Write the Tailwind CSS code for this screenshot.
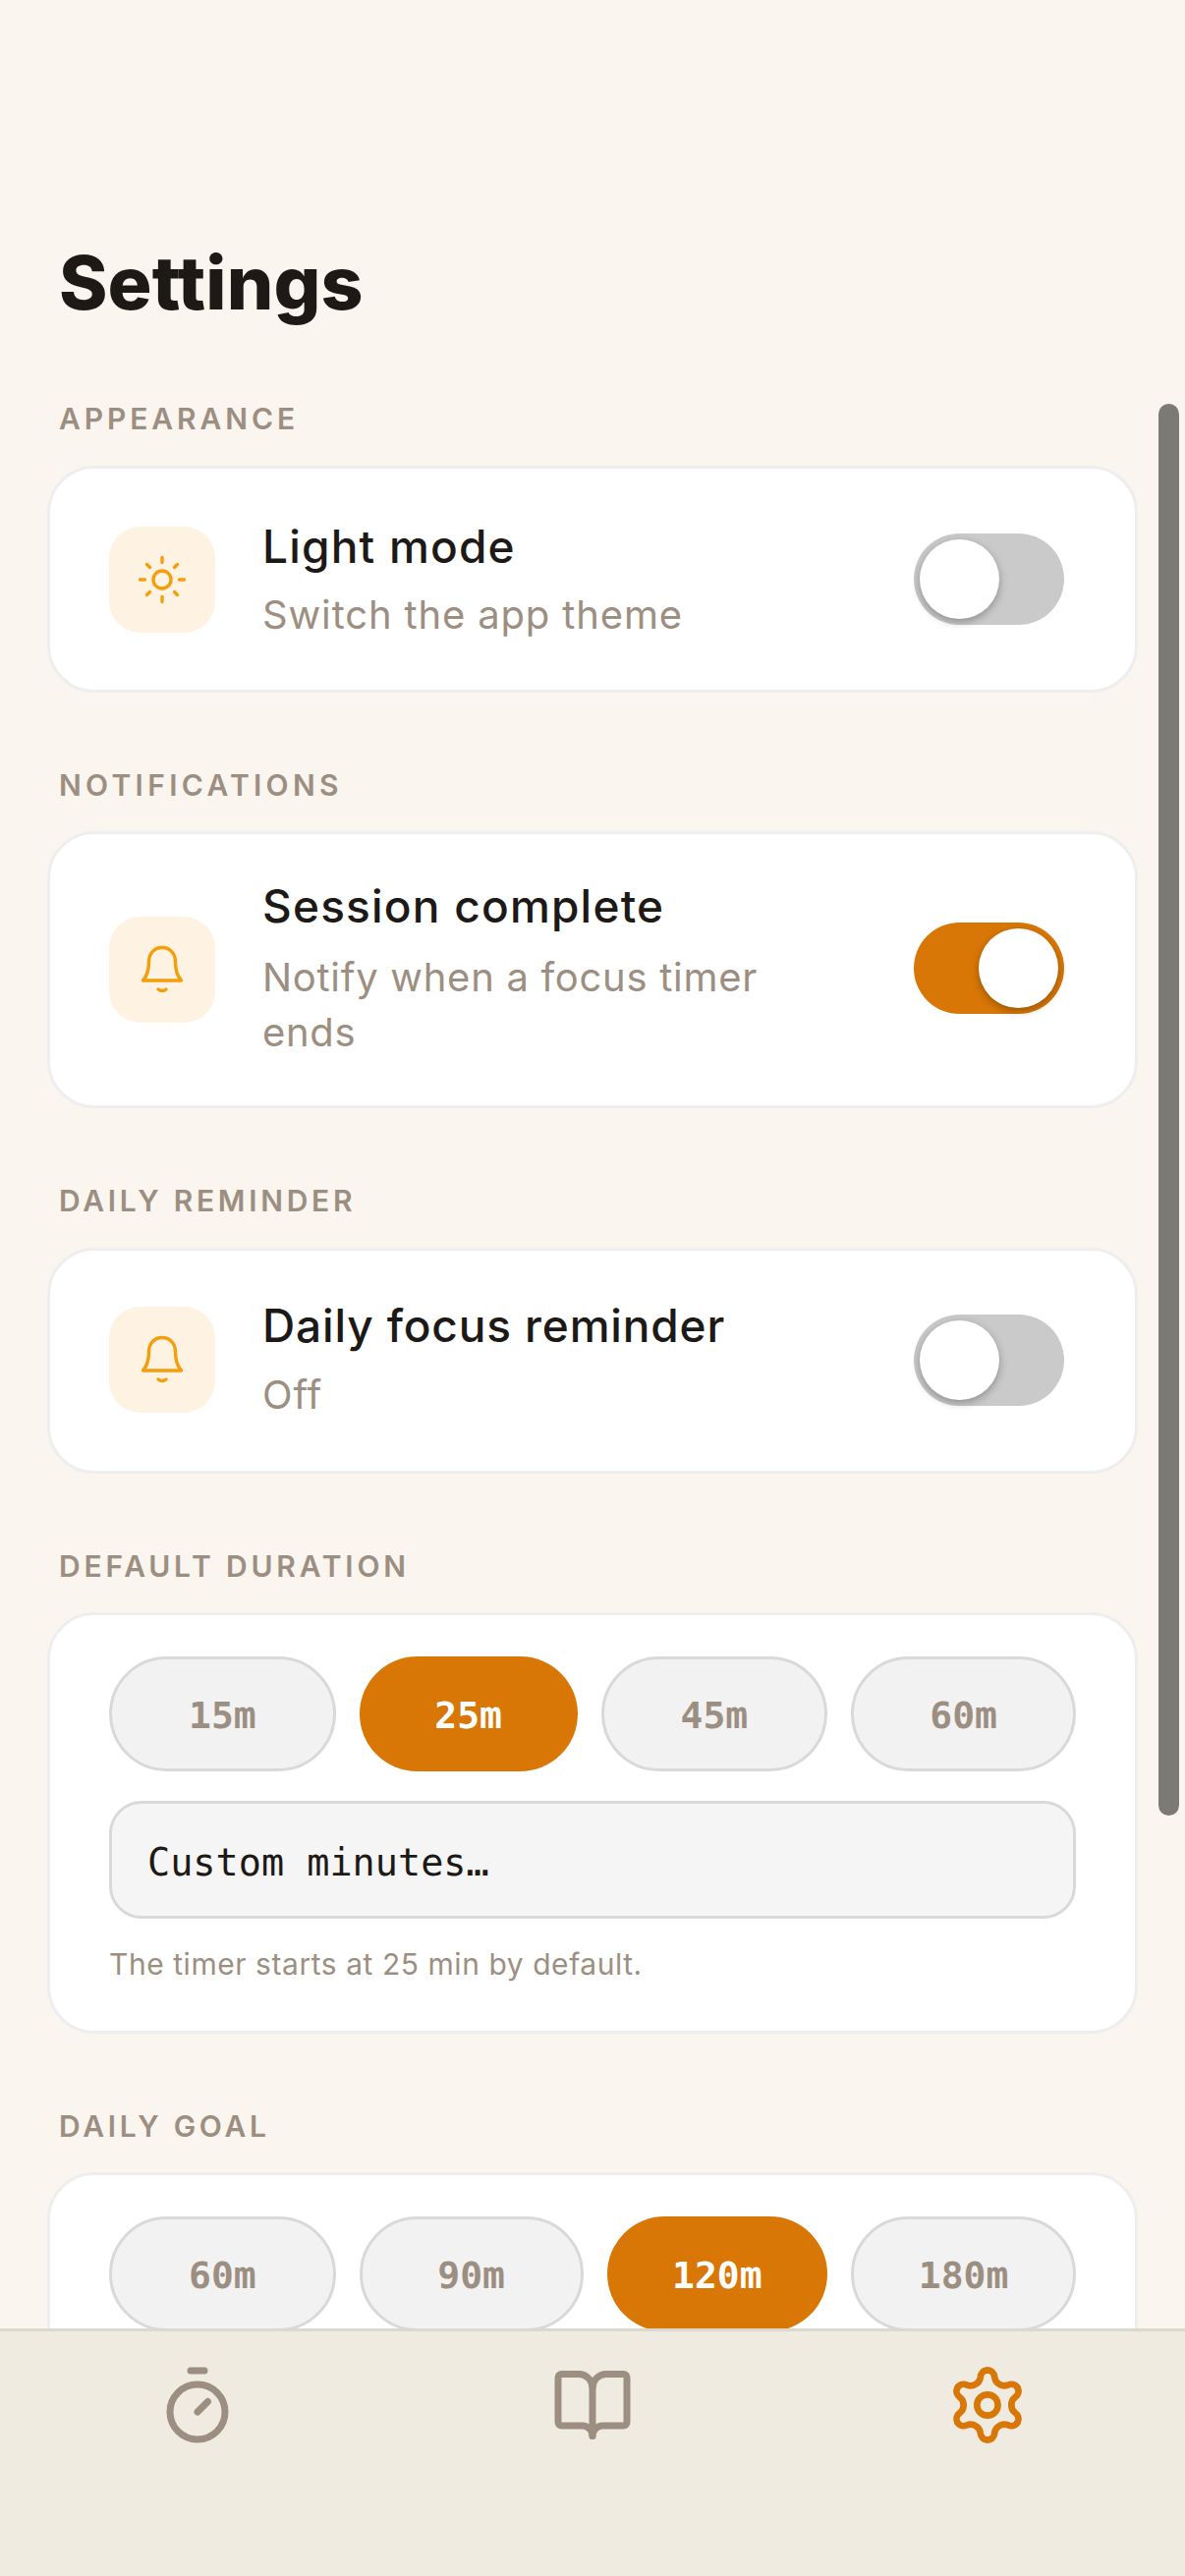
<!DOCTYPE html>
<html lang="en">
<head>
  <meta charset="UTF-8" />
  <title>Settings</title>
  <script src="https://cdn.jsdelivr.net/npm/@tailwindcss/browser@4"></script>
</head>
<body class="bg-[#faf5ef] font-['Inter',sans-serif] text-[#1c1917]">
  <div class="relative h-[2622px] w-[1206px] overflow-hidden">
    <div class="h-[2370px] overflow-hidden px-[48px]">
      <h1 class="pt-[240px] pl-[12px] text-[75px] leading-[96px] font-extrabold tracking-[0.1px]">Settings</h1>

      <!-- Appearance -->
      <h2 class="mt-[70px] pl-[12px] text-[30px] leading-[40px] font-semibold tracking-[3.9px] text-[#9c8f82]">APPEARANCE</h2>
      <section class="mt-[28px] flex h-[231px] items-center rounded-[48px] border-[3px] border-[#eeeeee] bg-white pr-[72px] pl-[60px]">
        <div class="flex h-[108px] w-[108px] items-center justify-center rounded-[32px] bg-[#fef3e2]">
          <svg class="h-[54px] w-[54px] text-[#f59e0b]" viewBox="0 0 54 54" fill="none" stroke="currentColor" stroke-width="3.4" stroke-linecap="round"><circle cx="27" cy="27" r="9"/><path d="M27 4.5v5M27 44.5v5M4.5 27h5M44.5 27h5M11.5 11.5l3 3M39.5 39.5l3 3M11.5 42.5l3-3M39.5 14.5l3-3"/></svg>
        </div>
        <div class="ml-[48px] flex-1">
          <p class="text-[46px] leading-[60px] font-medium tracking-[1.2px]">Light mode</p>
          <p class="mt-[12px] text-[40px] leading-[56px] tracking-[0.85px] text-[#9c8f82]">Switch the app theme</p>
        </div>
        <div class="flex h-[93px] w-[153px] items-center rounded-full bg-[#cacaca] pl-[6px]">
          <div class="h-[81px] w-[81px] rounded-full bg-white shadow-[0_3px_9px_rgba(0,0,0,0.3)]"></div>
        </div>
      </section>

      <!-- Notifications -->
      <h2 class="mt-[74px] pl-[12px] text-[30px] leading-[40px] font-semibold tracking-[4.3px] text-[#9c8f82]">NOTIFICATIONS</h2>
      <section class="mt-[27px] flex h-[282px] items-center rounded-[48px] border-[3px] border-[#eeeeee] bg-white pr-[72px] pl-[60px]">
        <div class="flex h-[108px] w-[108px] items-center justify-center rounded-[32px] bg-[#fef3e2]">
          <svg class="h-[54px] w-[54px] text-[#f59e0b]" viewBox="0 0 54 54" fill="none" stroke="currentColor" stroke-width="3.4" stroke-linecap="round" stroke-linejoin="round"><path d="M7.5 38H46.5C42 33 40.5 28 40.5 19C40.5 10 34.5 4.5 27 4.5C19.5 4.5 13.5 10 13.5 19C13.5 28 12 33 7.5 38Z"/><path d="M23 47Q27 50 31 47"/></svg>
        </div>
        <div class="ml-[48px] flex-1 -translate-y-[2px]">
          <p class="text-[46px] leading-[60px] font-medium tracking-[1.2px]">Session complete</p>
          <p class="mt-[15px] w-[560px] text-[40px] leading-[56px] tracking-[0.7px] text-[#9c8f82]">Notify when a focus timer ends</p>
        </div>
        <div class="-mt-[3px] flex h-[93px] w-[153px] items-center justify-end rounded-full bg-[#d97706] pr-[6px]">
          <div class="h-[81px] w-[81px] rounded-full bg-white shadow-[0_3px_9px_rgba(0,0,0,0.3)]"></div>
        </div>
      </section>

      <!-- Daily reminder -->
      <h2 class="mt-[74px] pl-[12px] text-[30px] leading-[40px] font-semibold tracking-[3.7px] text-[#9c8f82]">DAILY REMINDER</h2>
      <section class="mt-[28px] flex h-[230px] items-center rounded-[48px] border-[3px] border-[#eeeeee] bg-white pr-[72px] pl-[60px]">
        <div class="-mt-[2px] flex h-[108px] w-[108px] items-center justify-center rounded-[32px] bg-[#fef3e2]">
          <svg class="h-[54px] w-[54px] text-[#f59e0b]" viewBox="0 0 54 54" fill="none" stroke="currentColor" stroke-width="3.4" stroke-linecap="round" stroke-linejoin="round"><path d="M7.5 38H46.5C42 33 40.5 28 40.5 19C40.5 10 34.5 4.5 27 4.5C19.5 4.5 13.5 10 13.5 19C13.5 28 12 33 7.5 38Z"/><path d="M23 47Q27 50 31 47"/></svg>
        </div>
        <div class="ml-[48px] flex-1 -translate-y-[2px]">
          <p class="text-[46px] leading-[60px] font-medium tracking-[0.85px]">Daily focus reminder</p>
          <p class="mt-[13px] text-[40px] leading-[56px] tracking-[0.8px] text-[#9c8f82]">Off</p>
        </div>
        <div class="-mt-[2px] flex h-[93px] w-[153px] items-center rounded-full bg-[#cacaca] pl-[6px]">
          <div class="h-[81px] w-[81px] rounded-full bg-white shadow-[0_3px_9px_rgba(0,0,0,0.3)]"></div>
        </div>
      </section>

      <!-- Default duration -->
      <h2 class="mt-[74px] pl-[12px] text-[30px] leading-[40px] font-semibold tracking-[3.8px] text-[#9c8f82]">DEFAULT DURATION</h2>
      <section class="mt-[27px] h-[429px] rounded-[48px] border-[3px] border-[#eeeeee] bg-white px-[60px] pt-[42px]">
        <div class="flex gap-[24px] font-['DejaVu_Sans_Mono',monospace] text-[38px] font-bold">
          <div class="flex h-[117px] w-[231px] items-center justify-center rounded-full border-[3px] border-[#d9d9d9] bg-[#f2f2f2] pt-[3px] text-[#9c8f82]">15m</div>
          <div class="flex h-[117px] w-[222px] items-center justify-center rounded-full bg-[#d97706] pt-[3px] text-white">25m</div>
          <div class="flex h-[117px] w-[231px] items-center justify-center rounded-full border-[3px] border-[#d9d9d9] bg-[#f2f2f2] pt-[3px] text-[#9c8f82]">45m</div>
          <div class="flex h-[117px] w-[229px] items-center justify-center rounded-full border-[3px] border-[#d9d9d9] bg-[#f2f2f2] pt-[3px] text-[#9c8f82]">60m</div>
        </div>
        <div class="mt-[30px] flex h-[120px] items-center rounded-[33px] border-[3px] border-[#d9d9d9] bg-[#f5f5f5] pt-[5px] pl-[36px] font-['DejaVu_Sans_Mono',monospace] text-[38.5px] text-[#1c1917]">Custom minutes…</div>
        <p class="mt-[26px] text-[30px] leading-[40px] tracking-[0.55px] text-[#9c8f82]">The timer starts at 25 min by default.</p>
      </section>

      <!-- Daily goal -->
      <h2 class="mt-[74px] pl-[12px] text-[30px] leading-[40px] font-semibold tracking-[3.7px] text-[#9c8f82]">DAILY GOAL</h2>
      <section class="mt-[27px] h-[300px] rounded-[48px] border-[3px] border-[#eeeeee] bg-white px-[60px] pt-[42px]">
        <div class="flex gap-[24px] font-['DejaVu_Sans_Mono',monospace] text-[38px] font-bold">
          <div class="flex h-[117px] w-[231px] items-center justify-center rounded-full border-[3px] border-[#d9d9d9] bg-[#f2f2f2] pt-[3px] text-[#9c8f82]">60m</div>
          <div class="flex h-[117px] w-[228px] items-center justify-center rounded-full border-[3px] border-[#d9d9d9] bg-[#f2f2f2] pt-[3px] text-[#9c8f82]">90m</div>
          <div class="flex h-[117px] w-[225px] items-center justify-center rounded-full bg-[#d97706] pt-[3px] text-white">120m</div>
          <div class="flex h-[117px] w-[229px] items-center justify-center rounded-full border-[3px] border-[#d9d9d9] bg-[#f2f2f2] pt-[3px] text-[#9c8f82]">180m</div>
        </div>
      </section>
    </div>

    <!-- Scrollbar -->
    <div class="absolute top-[411px] right-[6px] h-[1437px] w-[21px] rounded-full bg-[#7b7a75]"></div>

    <!-- Bottom nav -->
    <nav class="flex h-[252px] items-start border-t-[3px] border-[#dcd8cc] bg-[#f0ebe1] pt-[33px]">
      <div class="flex flex-1 justify-center">
        <svg class="h-[84px] w-[84px] text-[#9c8f82]" viewBox="0 0 24 24" fill="none" stroke="currentColor" stroke-width="2" stroke-linecap="round" stroke-linejoin="round"><path d="M10 2h4"/><circle cx="12" cy="14" r="8"/><path d="M12 14l3-3"/></svg>
      </div>
      <div class="flex flex-1 justify-center">
        <svg class="h-[84px] w-[84px] text-[#9c8f82]" viewBox="0 0 24 24" fill="none" stroke="currentColor" stroke-width="2" stroke-linecap="round" stroke-linejoin="round"><path d="M12 7v14"/><path d="M3 18a1 1 0 0 1-1-1V4a1 1 0 0 1 1-1h5a4 4 0 0 1 4 4 4 4 0 0 1 4-4h5a1 1 0 0 1 1 1v13a1 1 0 0 1-1 1h-6a3 3 0 0 0-3 3 3 3 0 0 0-3-3z"/></svg>
      </div>
      <div class="flex flex-1 justify-center">
        <svg class="h-[84px] w-[84px] text-[#d97706]" viewBox="-126 -126 252 252" fill="none" stroke="currentColor" stroke-width="20" stroke-linecap="round" stroke-linejoin="round">
          <circle r="32"/>
          <path d="M0 -106C13 -106 21 -96 22 -84C23 -74 28 -68 36.5 -63.2C44.9 -58.2 52.5 -57 61.7 -61C72.7 -66.1 85.3 -64.3 91.8 -53"/>
          <path transform="rotate(60)" d="M0 -106C13 -106 21 -96 22 -84C23 -74 28 -68 36.5 -63.2C44.9 -58.2 52.5 -57 61.7 -61C72.7 -66.1 85.3 -64.3 91.8 -53"/>
          <path transform="rotate(120)" d="M0 -106C13 -106 21 -96 22 -84C23 -74 28 -68 36.5 -63.2C44.9 -58.2 52.5 -57 61.7 -61C72.7 -66.1 85.3 -64.3 91.8 -53"/>
          <path transform="rotate(180)" d="M0 -106C13 -106 21 -96 22 -84C23 -74 28 -68 36.5 -63.2C44.9 -58.2 52.5 -57 61.7 -61C72.7 -66.1 85.3 -64.3 91.8 -53"/>
          <path transform="rotate(240)" d="M0 -106C13 -106 21 -96 22 -84C23 -74 28 -68 36.5 -63.2C44.9 -58.2 52.5 -57 61.7 -61C72.7 -66.1 85.3 -64.3 91.8 -53"/>
          <path transform="rotate(300)" d="M0 -106C13 -106 21 -96 22 -84C23 -74 28 -68 36.5 -63.2C44.9 -58.2 52.5 -57 61.7 -61C72.7 -66.1 85.3 -64.3 91.8 -53"/>
        </svg>
      </div>
    </nav>
  </div>
</body>
</html>
